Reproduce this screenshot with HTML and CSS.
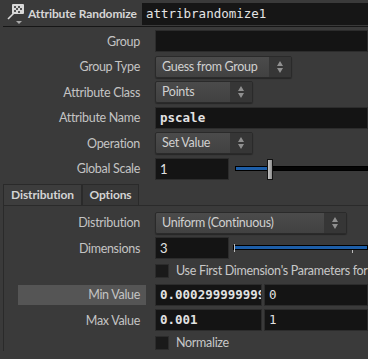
FILE: index.html
```html
<!DOCTYPE html>
<html lang="en">
<head>
  <meta charset="UTF-8">
  <title>Attribute Randomize</title>
  <link rel="stylesheet" href="styles.css">
</head>
<body>
  <header class="node-head">
    <div class="node-icon">
      <svg width="18" height="22" viewBox="0 0 18 22">
        <rect x="5" y="1" width="12" height="10" rx="1" fill="#d8d8d8"/>
        <rect x="7" y="3" width="2" height="2" fill="#555"/>
        <rect x="11" y="3" width="2" height="2" fill="#555"/>
        <rect x="9" y="5" width="2" height="2" fill="#555"/>
        <rect x="13" y="5" width="2" height="2" fill="#555"/>
        <rect x="7" y="7" width="2" height="2" fill="#555"/>
        <rect x="11" y="8" width="2" height="2" fill="#555"/>
        <line x1="7" y1="10" x2="1" y2="16" stroke="#d8d8d8" stroke-width="1.6"/>
        <path d="M9 18 L15 18 L12 21 Z" fill="#aaa"/>
      </svg>
    </div>
    <span class="node-type">Attribute Randomize</span>
    <div class="node-name">attribrandomize1</div>
  </header>

  <div class="parms">
    <div class="row">
      <label>Group</label>
      <div class="field wide"></div>
    </div>
    <div class="row">
      <label>Group Type</label>
      <div class="menu w137"><span>Guess from Group</span><i></i></div>
    </div>
    <div class="row">
      <label>Attribute Class</label>
      <div class="menu w98"><span>Points</span><i></i></div>
    </div>
    <div class="row">
      <label>Attribute Name</label>
      <div class="field wide mono bold">pscale</div>
    </div>
    <div class="row">
      <label>Operation</label>
      <div class="menu w98"><span>Set Value</span><i></i></div>
    </div>
    <div class="row">
      <label>Global Scale</label>
      <div class="field num">1</div>
      <div class="slider">
        <div class="track"><div class="fill" style="width: 32px"></div></div>
        <div class="handle" style="left: 32px"></div>
      </div>
    </div>
  </div>

  <div class="tabs">
    <button class="tab active">Distribution</button>
    <button class="tab">Options</button>
  </div>

  <div class="panel">
    <div class="row">
      <label>Distribution</label>
      <div class="menu w192"><span>Uniform (Continuous)</span><i></i></div>
    </div>
    <div class="row">
      <label>Dimensions</label>
      <div class="field num">3</div>
      <div class="slider s2">
        <div class="track full"><span class="tick t1"></span><span class="tick t2"></span></div>
      </div>
    </div>
    <div class="row check-row">
      <label></label>
      <div class="check"></div>
      <span class="check-text">Use First Dimension's Parameters for All</span>
    </div>
    <div class="row">
      <label class="hl">Min Value</label>
      <div class="field pair mono bold">0.0002999999999</div>
      <div class="field pair mono">0</div>
    </div>
    <div class="row">
      <label>Max Value</label>
      <div class="field pair mono bold">0.001</div>
      <div class="field pair mono">1</div>
    </div>
    <div class="row check-row">
      <label></label>
      <div class="check"></div>
      <span class="check-text">Normalize</span>
    </div>
  </div>
</body>
</html>
```

FILE: styles.css
```css
* { margin: 0; padding: 0; box-sizing: border-box; }
body {
  width: 368px;
  height: 359px;
  overflow: hidden;
  background: #3a3a3a;
  color: #cfcfcf;
  font-family: Lato, "Noto Sans", sans-serif;
  font-size: 12.5px;
  letter-spacing: -0.3px;
}

.node-head {
  display: flex;
  align-items: center;
  height: 27px;
  padding: 3px 0 2px 4px;
  margin-left: 3px;
  border-bottom: 1px solid #161616;
}
.node-icon {
  flex: none;
  width: 18px;
  height: 22px;
  margin-right: 3px;
}
.node-type {
  font-weight: bold;
  font-size: 12px;
  letter-spacing: -0.1px;
  color: #d6d6d6;
  white-space: nowrap;
  margin-right: 5px;
}
.node-name {
  flex: 1;
  height: 22px;
  line-height: 22px;
  background: #161616;
  padding-left: 4px;
  font-family: "DejaVu Sans Mono", monospace;
  font-size: 12.5px;
  letter-spacing: 0;
  color: #e4e4e4;
}

.parms {
  padding-top: 3px;
}
.row {
  display: flex;
  align-items: center;
  height: 22px;
  margin-bottom: 3.6px;
}
.row label {
  width: 141px;
  flex: none;
  text-align: right;
  padding-right: 1px;
  margin-right: 14px;
  color: #c4c4c4;
  white-space: nowrap;
}
.row label.hl {
  background: #555;
  height: 20px;
  line-height: 20px;
  margin-left: 18px;
  width: 128px;
  padding-right: 6px;
  margin-right: 9px;
}

.field {
  flex: none;
  height: 22px;
  line-height: 20px;
  background: #141414;
  border: 1px solid #2c2c2c;
  padding-left: 4px;
  color: #e2e2e2;
  overflow: hidden;
  white-space: nowrap;
}
.field.wide { flex: 1; }
.field.num { width: 74px; font-size: 13px; }
.field.pair { width: 107px; margin-right: 2px; }
.field.pair + .field.pair { flex: 1; margin-right: 0; }
.mono {
  font-family: "DejaVu Sans Mono", monospace;
  font-size: 12.5px;
  letter-spacing: 0;
}
.bold { font-weight: bold; }

.menu {
  display: flex;
  flex: none;
  height: 22px;
  border-radius: 2px;
  background: linear-gradient(#4b4b4b, #414141);
  border: 1px solid #2a2a2a;
  box-shadow: 0 1px 1px rgba(0,0,0,0.35);
  color: #d0d0d0;
}
.menu span {
  flex: 1;
  padding-left: 6px;
  line-height: 20px;
  white-space: nowrap;
}
.menu i {
  width: 22px;
  background: #363636 url("data:image/svg+xml,%3Csvg xmlns='http://www.w3.org/2000/svg' width='8' height='14'%3E%3Cpath d='M4 1 L7 6 L1 6 Z M4 13 L7 8 L1 8 Z' fill='%23909090'/%3E%3C/svg%3E") center no-repeat;
}
.w137 { width: 137px; }
.w98 { width: 98px; }
.w192 { width: 192px; }

.slider {
  position: relative;
  flex: 1;
  height: 22px;
  margin-left: 6px;
}
.track {
  position: absolute;
  left: 0;
  right: 0;
  top: 8px;
  height: 5px;
  background: #050505;
  border: 1px solid #000;
}
.fill {
  height: 100%;
  background: #1d5ea8;
}
.handle {
  position: absolute;
  top: 1px;
  width: 6px;
  height: 21px;
  background: linear-gradient(to right, #c4c4c4, #8e8e8e);
  border: 1px solid #111;
}
.s2 { margin-left: 4px; }
.track.full {
  background: #1d5ea8;
  top: 8px;
}
.tick {
  position: absolute;
  top: 4px;
  width: 1px;
  height: 3px;
  background: #bbb;
}
.t1 { left: 0; top: -2px; height: 8px; }
.t2 { left: 118px; }

.tabs {
  display: flex;
  margin-left: 3px;
  height: 21px;
}
.tab {
  font-family: Lato, "Noto Sans", sans-serif;
  font-weight: bold;
  font-size: 12px;
  letter-spacing: -0.1px;
  color: #d4d4d4;
  border: 1px solid #2a2a2a;
  border-bottom: none;
  height: 21px;
}
.tab.active { width: 79px; background: #3d3d3d; }
.tab + .tab { width: 57px; background: #373737; }

.panel {
  margin-left: 3px;
  border-top: 1px solid #2a2a2a;
  border-left: 1px solid #2a2a2a;
  padding-top: 6px;
}
.panel .row label { width: 137px; }
.panel .row label.hl { width: 128px; margin-left: 14px; }

.check-row { height: 16px; margin-top: 1px; margin-bottom: 5px; }
.check {
  flex: none;
  width: 14px;
  height: 14px;
  background: #1a1a1a;
  border: 1px solid #2c2c2c;
  margin-right: 7px;
}
.check-text {
  white-space: nowrap;
  color: #c8c8c8;
}
```
